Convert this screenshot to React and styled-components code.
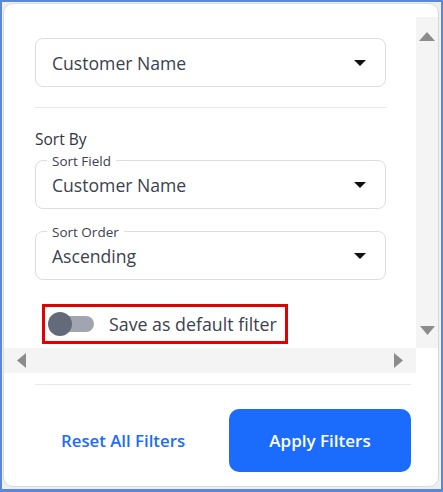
import React from 'react';
import styled, { createGlobalStyle } from 'styled-components';

const GlobalStyle = createGlobalStyle`
    html, body {
        margin: 0;
        padding: 0;
        background: #fff;
    }
    body {
        font-family: "Open Sans", "Liberation Sans", sans-serif;
        color: #3b414d;
    }
`;

const Frame = styled.div`
    width: 443px;
    height: 492px;
    box-sizing: border-box;
    border: 2px solid #5b87d8;
    border-bottom-width: 3px;
    background: #efefef;
    padding: 1px 2px 2px 1px;
`;

const Card = styled.div`
    height: 100%;
    box-sizing: border-box;
    display: flex;
    flex-direction: column;
    background: #fff;
    border: 1px solid #d8dade;
    border-radius: 10px;
    padding-top: 13px;
    overflow: hidden;
`;

const ScrollArea = styled.div`
    display: grid;
    grid-template-columns: 1fr 22px;
    grid-template-rows: 331px 25px;
`;

const Content = styled.div`
    padding: 21px 30px 0 31px;
    overflow: hidden;
`;

const VBar = styled.div`
    background: #f4f4f4;
    display: flex;
    flex-direction: column;
    align-items: center;
    justify-content: space-between;
    padding: 15px 0 13px;
`;

const HBar = styled.div`
    background: #f4f4f4;
    display: flex;
    align-items: center;
    justify-content: space-between;
    padding: 0 13px;
`;

const Corner = styled.div`
    background: #fff;
`;

const Select = styled.div`
    height: 49px;
    box-sizing: border-box;
    border: 1px solid #dcdde3;
    border-radius: 8px;
    display: flex;
    align-items: center;
    justify-content: space-between;
    padding: 0 19px 0 16px;
    font-size: 17.6px;
    color: #3b414d;
    position: relative;
    margin-top: ${p => p.gap || 0}px;
`;

const FieldLabel = styled.span`
    position: absolute;
    left: 11px;
    top: -9px;
    padding: 0 5px;
    background: #fff;
    font-size: 13.5px;
    font-weight: 500;
    color: #3b414d;
    line-height: 18px;
`;

const Divider = styled.div`
    height: 1px;
    background: #e8e9ee;
    margin-top: ${p => p.gap}px;
`;

const SectionTitle = styled.div`
    margin-top: 21px;
    font-size: 15.5px;
    font-weight: 500;
    line-height: 20px;
    color: #2f3541;
`;

const ToggleRow = styled.div`
    display: inline-flex;
    align-items: center;
    margin: 24px 0 0 7px;
    height: 40px;
    box-sizing: border-box;
    border: 3px solid #e20000;
    padding: 0 8px 0 3px;
    gap: 15px;
    font-size: 17.8px;
    color: #3b414d;
`;

const Switch = styled.span`
    position: relative;
    width: 46px;
    height: 24px;
    flex: none;
    &::before {
        content: "";
        position: absolute;
        left: 8px;
        right: 0;
        top: 4px;
        height: 16px;
        border-radius: 8px;
        background: #a1a5b1;
    }
    &::after {
        content: "";
        position: absolute;
        left: 0;
        top: 0;
        width: 24px;
        height: 24px;
        border-radius: 50%;
        background: #636a7a;
    }
`;

const Footer = styled.div`
    padding: 11px 27px 0 31px;
`;

const Buttons = styled.div`
    display: grid;
    grid-template-columns: 1fr 182px;
    align-items: center;
    margin-top: 24px;
`;

const LinkButton = styled.button`
    border: 0;
    background: none;
    font-family: inherit;
    font-size: 16.8px;
    font-weight: 600;
    color: #1b6cfc;
    text-align: left;
    padding: 0 0 0 26px;
`;

const PrimaryButton = styled.button`
    height: 63px;
    border: 0;
    border-radius: 10px;
    background: #1b6cfc;
    color: #fff;
    font-family: inherit;
    font-size: 17px;
    font-weight: 600;
`;

const Arrow = ({ dir, w, h, color = '#8c8c8c' }) => {
    const pts = {
        up: `0,${h} ${w / 2},0 ${w},${h}`,
        down: `0,0 ${w},0 ${w / 2},${h}`,
        left: `${w},0 0,${h / 2} ${w},${h}`,
        right: `0,0 ${w},${h / 2} 0,${h}`,
    }[dir];
    return (
        <svg width={w} height={h} viewBox={`0 0 ${w} ${h}`}>
            <polygon points={pts} fill={color} />
        </svg>
    );
};

const Caret = () => <Arrow dir="down" w={12} h={6} color="#111" />;

export default function App() {
    return (
        <>
            <GlobalStyle />
            <Frame>
                <Card>
                    <ScrollArea>
                        <Content>
                            <Select>
                                <span>Customer Name</span>
                                <Caret />
                            </Select>
                            <Divider gap={20} />
                            <SectionTitle>Sort By</SectionTitle>
                            <Select gap={11}>
                                <FieldLabel>Sort Field</FieldLabel>
                                <span>Customer Name</span>
                                <Caret />
                            </Select>
                            <Select gap={22}>
                                <FieldLabel>Sort Order</FieldLabel>
                                <span>Ascending</span>
                                <Caret />
                            </Select>
                            <ToggleRow>
                                <Switch />
                                <span>Save as default filter</span>
                            </ToggleRow>
                        </Content>
                        <VBar>
                            <Arrow dir="up" w={16} h={9} />
                            <Arrow dir="down" w={15} h={9} />
                        </VBar>
                        <HBar>
                            <Arrow dir="left" w={9} h={15} />
                            <Arrow dir="right" w={9} h={15} />
                        </HBar>
                        <Corner />
                    </ScrollArea>
                    <Footer>
                        <Divider gap={0} />
                        <Buttons>
                            <LinkButton>Reset All Filters</LinkButton>
                            <PrimaryButton>Apply Filters</PrimaryButton>
                        </Buttons>
                    </Footer>
                </Card>
            </Frame>
        </>
    );
}
